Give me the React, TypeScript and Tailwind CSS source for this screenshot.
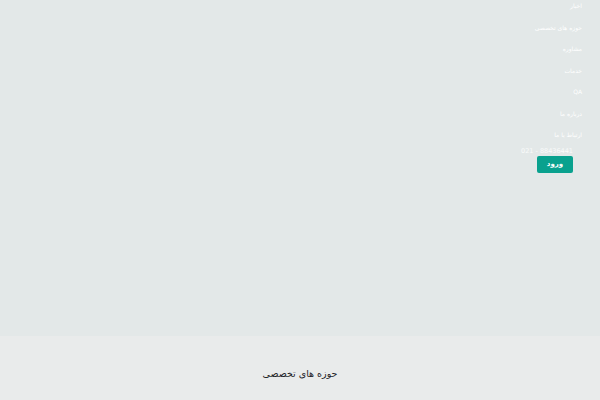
const ITEMS = ['اخبار', 'حوزه های تخصصی', 'مشاوره', 'خدمات', 'QA', 'درباره ما', 'ارتباط با ما']

export default function App() {
  return (
    <div dir="rtl" className="flex h-[400px] w-[600px] flex-col overflow-hidden bg-[#e9ebeb] font-['DejaVu_Sans','Noto_Sans',sans-serif]">
      <header className="h-[336px] bg-[#e3e8e8] pr-[18px]">
        <ul className="mt-[-5px] flex flex-col items-start">
          {ITEMS.map(item => (
            <li key={item} className="flex h-[21.5px] items-center text-[6px] text-white">
              {item}
            </li>
          ))}
        </ul>
        <p dir="ltr" className="mr-[9px] h-[10px] w-fit text-[6.5px] leading-[10px] text-white/80">
          021 - 88436441
        </p>
        <button className="mr-[9px] flex h-[17px] w-[36px] items-center justify-center rounded-[2px] bg-[#09a18e] text-[7px] font-bold text-white">
          ورود
        </button>
      </header>
      <main className="flex flex-1 justify-center pt-[28px]">
        <h2 className="text-[9.5px] leading-[20px] text-[#1f2428]">حوزه های تخصصی</h2>
      </main>
    </div>
  )
}
